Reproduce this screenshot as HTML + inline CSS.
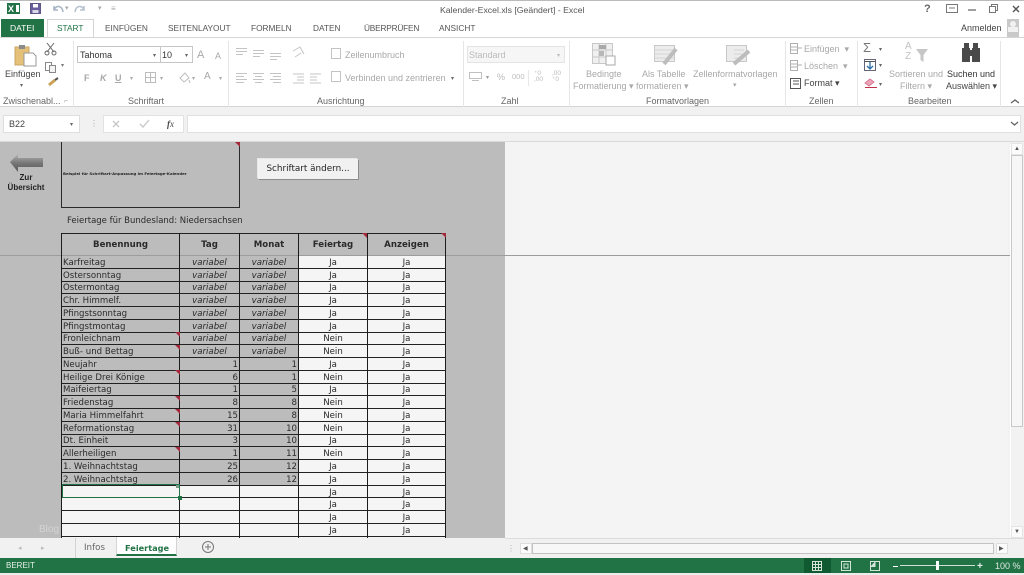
<!DOCTYPE html>
<html lang="de"><head><meta charset="utf-8"><title>Kalender-Excel</title>
<style>
html,body{margin:0;padding:0;width:1024px;height:575px;overflow:hidden;background:#fff}
body{position:relative;font-family:"Liberation Sans",sans-serif;color:#444}
.a,.t{position:absolute}
.t{white-space:nowrap;font-size:9px;line-height:12px;filter:blur(.25px)}
.dv{position:absolute;top:41px;height:66px;width:1px;background:#e6e6e6}
.g{color:#a8a8a8}
.tab{font-size:8.300px;color:#555;top:22px}
.lbl{top:95px;color:#666;font-size:9px}
.cell{position:absolute;margin-top:1px;font-family:"DejaVu Sans","Liberation Sans",sans-serif;font-size:8.600px;line-height:12px;height:12px;white-space:nowrap;color:#2a2a2a;filter:blur(.3px)}
.hl{position:absolute;left:61px;width:385px;height:1px;background:#222}
.vl{position:absolute;top:233px;height:305px;width:1px;background:#1c1c1c}
.red{position:absolute;width:0;height:0;border-top:5px solid #a32a3a;border-left:5px solid transparent}
svg{position:absolute;overflow:visible}
</style></head><body>

<!-- title bar -->
<div class="a" style="left:0;top:0;width:1024px;height:1px;background:#bbb"></div>
<div class="a" style="left:7px;top:3px;width:13px;height:11px;background:#217346"></div>
<div class="t" style="left:8px;top:3px;color:#fff;font-weight:bold;font-size:9px">X</div>
<div class="a" style="left:15px;top:4px;width:5px;height:9px;background:#fff;border:1px solid #217346;box-sizing:border-box"></div>
<svg style="left:30px;top:3px" width="12" height="12"><rect x="0.5" y="0.5" width="10" height="10" fill="#6a5f9a" stroke="#5d5688"/><rect x="3" y="1" width="5" height="3.5" fill="#fff"/><rect x="2.5" y="7" width="6" height="3" fill="#d8d8e8"/></svg>
<svg style="left:52px;top:3px" width="40" height="12" fill="none" stroke="#a9b6c6" stroke-width="1.6"><path d="M2 3 L2 7 L6 7 M2 7 C4 2 10 2 11 9"/><path d="M32 3 L32 7 L28 7 M32 7 C30 2 24 2 23 9" stroke="#b8c2ce"/></svg>
<div class="t g" style="left:65px;top:3px;font-size:7px">▾</div>
<div class="t g" style="left:98px;top:3px;font-size:7px">▾</div>
<div class="t g" style="left:111px;top:3px;font-size:8px">≡</div>
<div class="t" style="left:440px;top:4px;font-size:8.700px;color:#555">Kalender-Excel.xls [Geändert] - Excel</div>
<div class="t" style="left:924px;top:3px;font-size:11px;font-weight:bold;color:#666">?</div>
<svg style="left:945px;top:3px" width="78" height="12" fill="none" stroke="#777"><rect x="1.5" y="1.5" width="11" height="8"/><path d="M4 5h6"/><path d="M23 7h8" stroke-width="1.4"/><rect x="44.5" y="3.5" width="6" height="6"/><path d="M46.500 3.500v-2h6v6h-2"/><path d="M68 3l6 6M74 3l-6 6" stroke-width="1.4" stroke="#555"/></svg>

<!-- tabs -->
<div class="a" style="left:1px;top:19px;width:43px;height:18px;background:#217346"></div>
<div class="t" style="left:10px;top:22px;color:#fff;font-size:8.500px">DATEI</div>
<div class="a" style="left:47px;top:19px;width:47px;height:19px;background:#fff;border:1px solid #d4d4d4;border-bottom:0;box-sizing:border-box"></div>
<div class="t tab" style="left:57px;color:#217346">START</div>
<div class="t tab" style="left:105px">EINFÜGEN</div>
<div class="t tab" style="left:168px">SEITENLAYOUT</div>
<div class="t tab" style="left:251px">FORMELN</div>
<div class="t tab" style="left:313px">DATEN</div>
<div class="t tab" style="left:364px;letter-spacing:-.2px">ÜBERPRÜFEN</div>
<div class="t tab" style="left:439px">ANSICHT</div>
<div class="t" style="left:961px;top:22px;font-size:9px;color:#444">Anmelden</div>
<div class="a" style="left:1007px;top:19px;width:12px;height:18px;background:#c9c9c9"></div>
<div class="a" style="left:1010px;top:21px;width:6px;height:6px;border-radius:3px;background:#f1f1f1"></div>
<div class="a" style="left:1008px;top:27px;width:10px;height:5px;background:#f1f1f1"></div>
<div class="a" style="left:0;top:37px;width:1024px;height:1px;background:#d6d6d6"></div>

<!-- ribbon -->
<div class="a" style="left:0;top:106px;width:1024px;height:1px;background:#d4d4d4"></div>
<div class="a" style="left:0;top:107px;width:1024px;height:35px;background:#f1f1f1"></div>
<div class="dv" style="left:73px"></div><div class="dv" style="left:228px"></div><div class="dv" style="left:463px"></div><div class="dv" style="left:569px"></div><div class="dv" style="left:785px"></div><div class="dv" style="left:857px"></div><div class="dv" style="left:1000px"></div>

<!-- Clipboard -->
<svg style="left:14px;top:43px" width="24" height="24"><rect x="1" y="4" width="14" height="18" fill="#e4c078" stroke="#c9a765"/><rect x="5" y="2" width="6" height="4" fill="#8b8b8b"/><path d="M10 10h9l3 3v10H10z" fill="#fff" stroke="#999"/></svg>
<div class="t" style="left:5px;top:68px;font-size:9px;color:#444">Einfügen</div>
<div class="t" style="left:20px;top:80px;font-size:6px;color:#666">▾</div>
<svg style="left:44px;top:41px" width="22" height="50" fill="none" stroke="#666"><path d="M3 2l7 9M10 2l-7 9"/><circle cx="3" cy="12" r="2"/><circle cx="10" cy="12" r="2"/><rect x="1.500" y="21.500" width="6" height="8" stroke="#888"/><rect x="5.500" y="24.500" width="6" height="7" fill="#f4f4f4" stroke="#888"/><path d="M5 44l6-5" stroke="#c9a255" stroke-width="3"/><path d="M11 39l3-2" stroke="#555" stroke-width="2"/></svg>
<div class="t" style="left:61px;top:60px;font-size:6px;color:#777">▾</div>
<div class="t lbl" style="left:3px">Zwischenabl...</div>
<div class="t" style="left:64px;top:96px;font-size:7px;color:#999">⌐</div>

<!-- Font -->
<div class="a" style="left:77px;top:46px;width:84px;height:17px;background:#fff;border:1px solid #c6c6c6;box-sizing:border-box"></div>
<div class="a" style="left:160px;top:46px;width:33px;height:17px;background:#fff;border:1px solid #c6c6c6;box-sizing:border-box"></div>
<div class="t" style="left:80px;top:49px;color:#333;font-size:9px">Tahoma</div>
<div class="t" style="left:162px;top:49px;color:#333;font-size:9px">10</div>
<div class="t" style="left:153px;top:50px;font-size:6px;color:#666">▾</div>
<div class="t" style="left:185px;top:50px;font-size:6px;color:#666">▾</div>
<div class="t g" style="left:197px;top:49px;font-size:11px">A</div>
<div class="t g" style="left:215px;top:50px;font-size:9px">A</div>
<div class="t g" style="left:84px;top:72px;font-weight:bold">F</div>
<div class="t g" style="left:100px;top:72px;font-style:italic;font-weight:bold">K</div>
<div class="t g" style="left:115px;top:72px;font-weight:bold;text-decoration:underline">U</div>
<div class="t g" style="left:130px;top:73px;font-size:6px">▾</div>
<svg style="left:145px;top:72px" width="12" height="12" fill="none" stroke="#bcbcbc"><rect x=".5" y=".5" width="10" height="10"/><path d="M5.500 .5v10M.5 5.500h10"/></svg>
<div class="t g" style="left:160px;top:73px;font-size:6px">▾</div>
<svg style="left:178px;top:72px" width="13" height="12" fill="none" stroke="#bcbcbc"><path d="M2 6l5-5 4 5-5 4z"/><path d="M11 8l1 3"/></svg>
<div class="t g" style="left:192px;top:73px;font-size:6px">▾</div>
<div class="t g" style="left:204px;top:71px;font-size:10px">A</div>
<div class="t g" style="left:219px;top:73px;font-size:6px">▾</div>
<div class="t lbl" style="left:128px">Schriftart</div>

<!-- Alignment -->
<svg style="left:235px;top:46px" width="190" height="42" stroke="#c4c4c4" fill="none">
<path d="M1 2.500h11M1 5.500h11M1 8.500h7M18 4.500h11M18 7.500h11M18 10.500h7M35 7.500h11M35 10.500h11M35 13.500h7"/>
<path d="M1 27.500h11M1 30.500h8M1 33.500h11M1 36.500h8M18 27.500h11M20 30.500h7M18 33.500h11M20 36.500h7M35 27.500h11M38 30.500h8M35 33.500h11M38 36.500h8"/>
<path d="M58 5l7-4 4 7M60 11l6-4"/>
<path d="M58 28h11M62 31h7M62 34h7M58 37h11M75 28h11M75 31h7M75 34h7M75 37h11"/>
<rect x="96.500" y="2.500" width="9" height="10"/><rect x="96.500" y="25.500" width="9" height="10"/>
</svg>
<div class="t g" style="left:345px;top:49px;font-size:9px">Zeilenumbruch</div>
<div class="t g" style="left:345px;top:72px;font-size:9px">Verbinden und zentrieren</div>
<div class="t" style="left:451px;top:73px;font-size:6px;color:#666">▾</div>
<div class="t lbl" style="left:317px">Ausrichtung</div>

<!-- Number -->
<div class="a" style="left:467px;top:46px;width:98px;height:17px;background:#f6f6f6;border:1px solid #e4e4e4;box-sizing:border-box"></div>
<div class="t" style="left:469px;top:49px;font-size:9px;color:#bbb">Standard</div>
<div class="t" style="left:557px;top:50px;font-size:6px;color:#bbb">▾</div>
<svg style="left:469px;top:72px" width="14" height="10" fill="none" stroke="#c0c0c0"><rect x=".5" y=".5" width="12" height="6"/><path d="M3 8.500h7"/></svg>
<div class="t" style="left:486px;top:72px;font-size:6px;color:#999">▾</div>
<div class="t" style="left:497px;top:71px;font-size:9px;color:#bbb">%</div>
<div class="t" style="left:512px;top:71px;font-size:7.500px;color:#bbb">000</div>
<div class="t" style="left:534px;top:71px;font-size:6.500px;line-height:6px;color:#bbb">⁺0<br>,00</div>
<div class="t" style="left:552px;top:71px;font-size:6.500px;line-height:6px;color:#bbb">,00<br>⁺0</div>
<div class="a" style="left:528px;top:70px;width:1px;height:16px;background:#e6e6e6"></div>
<div class="t lbl" style="left:501px">Zahl</div>

<!-- Styles -->
<svg style="left:592px;top:43px" width="160" height="24" fill="none">
<rect x=".5" y=".5" width="20" height="20" fill="#f0f0f0" stroke="#c8c8c8"/><path d="M7 .5v20M14 .5v20M.5 7h20M.5 14h20" stroke="#c8c8c8"/><rect x="7" y="2" width="7" height="4" fill="#a9a9a9"/><rect x="7" y="8" width="5" height="5" fill="#b8b8b8"/><rect x="14" y="13" width="9" height="9" fill="#fff" stroke="#aaa"/>
<rect x="62.500" y="2.500" width="20" height="16" fill="#ececec" stroke="#c8c8c8"/><path d="M62 7h20M62 11h20M62 15h20" stroke="#d4d4d4"/><path d="M72 21l12-15" stroke="#bdbdbd" stroke-width="4"/>
<rect x="134.500" y="2.500" width="20" height="16" fill="#ececec" stroke="#c8c8c8"/><path d="M142 7h10M142 11h10M142 15h10" stroke="#d4d4d4"/><path d="M142 21l15-13" stroke="#bdbdbd" stroke-width="4"/>
</svg>
<div class="t g" style="left:586px;top:68px;font-size:9px">Bedingte</div>
<div class="t g" style="left:573px;top:80px;font-size:9px">Formatierung ▾</div>
<div class="t g" style="left:642px;top:68px;font-size:9px">Als Tabelle</div>
<div class="t g" style="left:636px;top:80px;font-size:9px">formatieren ▾</div>
<div class="t g" style="left:693px;top:68px;font-size:9px">Zellenformatvorlagen</div>
<div class="t g" style="left:733px;top:80px;font-size:7px">▾</div>
<div class="t lbl" style="left:646px">Formatvorlagen</div>

<!-- Cells -->
<svg style="left:790px;top:43px" width="14" height="46" fill="none" stroke="#b0b0b0"><rect x=".5" y=".5" width="7" height="10"/><path d="M.5 4h7M.5 7h7M8 5h4"/><rect x=".5" y="17.500" width="7" height="10"/><path d="M.5 21h7M.5 24h7M8 22h4"/><rect x=".5" y="35.500" width="10" height="10" stroke="#555"/><path d="M3 38h6M3 41h6" stroke="#555"/></svg>
<div class="t g" style="left:804px;top:43px;font-size:9px">Einfügen &nbsp;▾</div>
<div class="t g" style="left:804px;top:60px;font-size:9px">Löschen &nbsp;▾</div>
<div class="t" style="left:804px;top:77px;font-size:9px;color:#444">Format ▾</div>
<div class="t lbl" style="left:809px">Zellen</div>

<!-- Editing -->
<div class="t" style="left:863px;top:42px;font-size:13px;color:#777">Σ</div>
<div class="t" style="left:879px;top:44px;font-size:6px;color:#666">▾</div>
<svg style="left:864px;top:59px" width="14" height="14" fill="none"><rect x=".5" y=".5" width="11" height="11" stroke="#667"/><path d="M.5 2.500h11" stroke="#555"/><path d="M6 3v7M3 7l3 3 3-3" stroke="#2b6fa8" stroke-width="1.300"/></svg>
<div class="t" style="left:879px;top:60px;font-size:6px;color:#666">▾</div>
<svg style="left:864px;top:77px" width="14" height="12" fill="none"><path d="M1 6l5-4 4 3-5 4z" fill="#eda3b8" stroke="#d67a94"/><path d="M1 10.500h12" stroke="#c0304a"/></svg>
<div class="t" style="left:879px;top:79px;font-size:6px;color:#666">▾</div>
<div class="t" style="left:905px;top:42px;font-size:10px;line-height:10px;color:#c2c2c2">A<br>Z</div>
<svg style="left:915px;top:48px" width="14" height="16"><path d="M1 1h12L8.500 7v7L5.500 12V7z" fill="#c6c6c6"/></svg>
<div class="t g" style="left:889px;top:68px;font-size:9px">Sortieren und</div>
<div class="t g" style="left:900px;top:80px;font-size:9px">Filtern ▾</div>
<svg style="left:961px;top:43px" width="20" height="20" fill="#4a4a4a"><rect x="3" y="0" width="5" height="6"/><rect x="12" y="0" width="5" height="6"/><rect x="1" y="5" width="8" height="14"/><rect x="11" y="5" width="8" height="14"/><rect x="8" y="7" width="4" height="6"/></svg>
<div class="t" style="left:947px;top:68px;font-size:9px;color:#333">Suchen und</div>
<div class="t" style="left:946px;top:80px;font-size:9px;color:#444">Auswählen ▾</div>
<div class="t lbl" style="left:908px">Bearbeiten</div>
<svg style="left:1010px;top:98px" width="10" height="6" fill="none" stroke="#666" stroke-width="1.400"><path d="M1 5l4-3 4 3"/></svg>

<!-- formula bar -->
<div class="a" style="left:3px;top:115px;width:77px;height:18px;background:#fff;border:1px solid #dedede;box-sizing:border-box"></div>
<div class="t" style="left:9px;top:118px;font-size:9px;color:#444">B22</div>
<div class="t" style="left:70px;top:119px;font-size:6px;color:#666">▾</div>
<div class="t g" style="left:90px;top:118px;font-size:8px">⋮</div>
<div class="a" style="left:103px;top:115px;width:81px;height:18px;background:#fff;border:1px solid #e2e2e2;box-sizing:border-box"></div>
<svg style="left:112px;top:119px" width="40" height="10" fill="none" stroke="#c6c6c6" stroke-width="1.300"><path d="M1 2l6 6M7 2l-6 6M28 5l3 3 6-7"/></svg>
<div class="t" style="left:167px;top:118px;font-size:9px;font-family:'Liberation Serif',serif;font-style:italic;color:#444"><b>f</b>x</div>
<div class="a" style="left:187px;top:115px;width:834px;height:18px;background:#fff;border:1px solid #e0e0e0;box-sizing:border-box"></div>
<svg style="left:1010px;top:121px" width="9" height="6" fill="none" stroke="#666" stroke-width="1.300"><path d="M1 1l3.500 3L8 1"/></svg>

<!-- sheet -->
<div class="a" style="left:0;top:141px;width:1024px;height:1px;background:#d9d9d9"></div>
<div class="a" style="left:0;top:142px;width:505px;height:396px;background:#bcbcbc"></div>
<div class="a" style="left:505px;top:142px;width:505px;height:396px;background:#f4f4f4"></div>
<div class="a" style="left:1008px;top:142px;width:16px;height:396px;background:#f2f2f2"></div>
<div class="a" style="left:1010px;top:144px;width:1px;height:394px;background:#fff"></div>
<div class="a" style="left:1011px;top:143px;width:12px;height:12px;background:#fbfbfb;border:1px solid #e4e4e4;box-sizing:border-box"></div>
<div class="t" style="left:1014px;top:143px;font-size:6px;color:#555">▲</div>
<div class="a" style="left:1011px;top:155px;width:12px;height:272px;background:#f6f6f6;border:1px solid #c8c8c8;box-sizing:border-box"></div>
<div class="a" style="left:1011px;top:526px;width:12px;height:12px;background:#fbfbfb;border:1px solid #e4e4e4;box-sizing:border-box"></div>
<div class="t" style="left:1014px;top:526px;font-size:6px;color:#555">▼</div>

<!-- arrow -->
<svg style="left:10px;top:152px" width="34" height="22"><defs><linearGradient id="ag" x1="0" x2="0" y1="0" y2="1"><stop offset="0" stop-color="#b5b5b5"/><stop offset=".5" stop-color="#777"/><stop offset="1" stop-color="#555"/></linearGradient></defs><path d="M0 10L8 2V6H33V15H8V20Z" fill="url(#ag)"/></svg>
<div class="t" style="left:0;top:173px;width:52px;text-align:center;font-size:8px;line-height:10px;font-weight:bold;color:#222">Zur<br>Übersicht</div>

<!-- top box -->
<div class="a" style="left:61px;top:142px;width:179px;height:66px;border:1px solid #2a2a2a;border-top:0;box-sizing:border-box"></div>
<div class="red" style="left:235px;top:142px"></div>
<div class="t" style="left:63px;top:172px;font-size:3.900px;line-height:4px;font-family:'DejaVu Sans',sans-serif;font-weight:bold;color:#222">Beispiel für Schriftart-Anpassung im Feiertage-Kalender</div>

<!-- button -->
<div class="a" style="left:258px;top:159px;width:100px;height:20px;background:#f1f1f1;box-shadow:1px 1px 0 #8b8b8b,-1px -1px 0 #e8e8e8"></div>
<div class="t" style="left:258px;top:163px;width:100px;text-align:center;font-family:'DejaVu Sans',sans-serif;font-size:8.800px;color:#222">Schriftart ändern...</div>

<div class="cell" style="left:67px;top:214px;font-size:8.500px">Feiertage für Bundesland: Niedersachsen</div>

<!-- table backgrounds -->
<div class="a" style="left:298px;top:255px;width:148px;height:230px;background:#f5f5f5"></div>
<div class="a" style="left:62px;top:485px;width:384px;height:53px;background:#f5f5f5"></div>

<!-- horizontal freeze line -->
<div class="a" style="left:0;top:255px;width:1010px;height:1px;background:#9c9c9c"></div>

<!-- lines -->
<div class="hl" style="top:233px"></div>
<div class="hl" style="top:268px"></div><div class="hl" style="top:281px"></div><div class="hl" style="top:293px"></div><div class="hl" style="top:306px"></div><div class="hl" style="top:319px"></div><div class="hl" style="top:332px"></div><div class="hl" style="top:344px"></div><div class="hl" style="top:357px"></div><div class="hl" style="top:370px"></div><div class="hl" style="top:383px"></div><div class="hl" style="top:395px"></div><div class="hl" style="top:408px"></div><div class="hl" style="top:421px"></div><div class="hl" style="top:434px"></div><div class="hl" style="top:446px"></div><div class="hl" style="top:459px"></div><div class="hl" style="top:472px"></div><div class="hl" style="top:485px"></div><div class="hl" style="top:497px"></div><div class="hl" style="top:510px"></div><div class="hl" style="top:523px"></div><div class="hl" style="top:536px"></div>
<div class="vl" style="left:61px"></div><div class="vl" style="left:179px"></div><div class="vl" style="left:239px"></div><div class="vl" style="left:298px"></div><div class="vl" style="left:367px"></div><div class="vl" style="left:445px"></div>

<!-- header -->
<div class="cell" style="left:62px;width:117px;top:238px;text-align:center;font-weight:bold">Benennung</div>
<div class="cell" style="left:180px;width:59px;top:238px;text-align:center;font-weight:bold">Tag</div>
<div class="cell" style="left:240px;width:58px;top:238px;text-align:center;font-weight:bold">Monat</div>
<div class="cell" style="left:299px;width:68px;top:238px;text-align:center;font-weight:bold">Feiertag</div>
<div class="cell" style="left:368px;width:77px;top:238px;text-align:center;font-weight:bold">Anzeigen</div>
<div class="red" style="left:362px;top:233px"></div><div class="red" style="left:441px;top:233px"></div>

<!-- names -->
<div class="cell" style="left:63px;top:256px">Karfreitag</div>
<div class="cell" style="left:63px;top:269px">Ostersonntag</div>
<div class="cell" style="left:63px;top:281px">Ostermontag</div>
<div class="cell" style="left:63px;top:294px">Chr. Himmelf.</div>
<div class="cell" style="left:63px;top:307px">Pfingstsonntag</div>
<div class="cell" style="left:63px;top:320px">Pfingstmontag</div>
<div class="cell" style="left:63px;top:332px">Fronleichnam</div>
<div class="cell" style="left:63px;top:345px">Buß- und Bettag</div>
<div class="cell" style="left:63px;top:358px">Neujahr</div>
<div class="cell" style="left:63px;top:371px">Heilige Drei Könige</div>
<div class="cell" style="left:63px;top:383px">Maifeiertag</div>
<div class="cell" style="left:63px;top:396px">Friedenstag</div>
<div class="cell" style="left:63px;top:409px">Maria Himmelfahrt</div>
<div class="cell" style="left:63px;top:422px">Reformationstag</div>
<div class="cell" style="left:63px;top:434px">Dt. Einheit</div>
<div class="cell" style="left:63px;top:447px">Allerheiligen</div>
<div class="cell" style="left:63px;top:460px">1. Weihnachtstag</div>
<div class="cell" style="left:63px;top:473px">2. Weihnachtstag</div>

<!-- variabel -->
<div class="cell" style="left:180px;width:59px;text-align:center;font-style:italic;top:256px">variabel</div><div class="cell" style="left:240px;width:58px;text-align:center;font-style:italic;top:256px">variabel</div>
<div class="cell" style="left:180px;width:59px;text-align:center;font-style:italic;top:269px">variabel</div><div class="cell" style="left:240px;width:58px;text-align:center;font-style:italic;top:269px">variabel</div>
<div class="cell" style="left:180px;width:59px;text-align:center;font-style:italic;top:281px">variabel</div><div class="cell" style="left:240px;width:58px;text-align:center;font-style:italic;top:281px">variabel</div>
<div class="cell" style="left:180px;width:59px;text-align:center;font-style:italic;top:294px">variabel</div><div class="cell" style="left:240px;width:58px;text-align:center;font-style:italic;top:294px">variabel</div>
<div class="cell" style="left:180px;width:59px;text-align:center;font-style:italic;top:307px">variabel</div><div class="cell" style="left:240px;width:58px;text-align:center;font-style:italic;top:307px">variabel</div>
<div class="cell" style="left:180px;width:59px;text-align:center;font-style:italic;top:320px">variabel</div><div class="cell" style="left:240px;width:58px;text-align:center;font-style:italic;top:320px">variabel</div>
<div class="cell" style="left:180px;width:59px;text-align:center;font-style:italic;top:332px">variabel</div><div class="cell" style="left:240px;width:58px;text-align:center;font-style:italic;top:332px">variabel</div>
<div class="cell" style="left:180px;width:59px;text-align:center;font-style:italic;top:345px">variabel</div><div class="cell" style="left:240px;width:58px;text-align:center;font-style:italic;top:345px">variabel</div>

<!-- numbers -->
<div class="cell" style="left:180px;width:58px;text-align:right;top:358px">1</div><div class="cell" style="left:240px;width:57px;text-align:right;top:358px">1</div>
<div class="cell" style="left:180px;width:58px;text-align:right;top:371px">6</div><div class="cell" style="left:240px;width:57px;text-align:right;top:371px">1</div>
<div class="cell" style="left:180px;width:58px;text-align:right;top:383px">1</div><div class="cell" style="left:240px;width:57px;text-align:right;top:383px">5</div>
<div class="cell" style="left:180px;width:58px;text-align:right;top:396px">8</div><div class="cell" style="left:240px;width:57px;text-align:right;top:396px">8</div>
<div class="cell" style="left:180px;width:58px;text-align:right;top:409px">15</div><div class="cell" style="left:240px;width:57px;text-align:right;top:409px">8</div>
<div class="cell" style="left:180px;width:58px;text-align:right;top:422px">31</div><div class="cell" style="left:240px;width:57px;text-align:right;top:422px">10</div>
<div class="cell" style="left:180px;width:58px;text-align:right;top:434px">3</div><div class="cell" style="left:240px;width:57px;text-align:right;top:434px">10</div>
<div class="cell" style="left:180px;width:58px;text-align:right;top:447px">1</div><div class="cell" style="left:240px;width:57px;text-align:right;top:447px">11</div>
<div class="cell" style="left:180px;width:58px;text-align:right;top:460px">25</div><div class="cell" style="left:240px;width:57px;text-align:right;top:460px">12</div>
<div class="cell" style="left:180px;width:58px;text-align:right;top:473px">26</div><div class="cell" style="left:240px;width:57px;text-align:right;top:473px">12</div>

<!-- Feiertag / Anzeigen -->
<div class="cell" style="left:299px;width:68px;text-align:center;top:256px">Ja</div><div class="cell" style="left:368px;width:77px;text-align:center;top:256px">Ja</div>
<div class="cell" style="left:299px;width:68px;text-align:center;top:269px">Ja</div><div class="cell" style="left:368px;width:77px;text-align:center;top:269px">Ja</div>
<div class="cell" style="left:299px;width:68px;text-align:center;top:281px">Ja</div><div class="cell" style="left:368px;width:77px;text-align:center;top:281px">Ja</div>
<div class="cell" style="left:299px;width:68px;text-align:center;top:294px">Ja</div><div class="cell" style="left:368px;width:77px;text-align:center;top:294px">Ja</div>
<div class="cell" style="left:299px;width:68px;text-align:center;top:307px">Ja</div><div class="cell" style="left:368px;width:77px;text-align:center;top:307px">Ja</div>
<div class="cell" style="left:299px;width:68px;text-align:center;top:320px">Ja</div><div class="cell" style="left:368px;width:77px;text-align:center;top:320px">Ja</div>
<div class="cell" style="left:299px;width:68px;text-align:center;top:332px">Nein</div><div class="cell" style="left:368px;width:77px;text-align:center;top:332px">Ja</div>
<div class="cell" style="left:299px;width:68px;text-align:center;top:345px">Nein</div><div class="cell" style="left:368px;width:77px;text-align:center;top:345px">Ja</div>
<div class="cell" style="left:299px;width:68px;text-align:center;top:358px">Ja</div><div class="cell" style="left:368px;width:77px;text-align:center;top:358px">Ja</div>
<div class="cell" style="left:299px;width:68px;text-align:center;top:371px">Nein</div><div class="cell" style="left:368px;width:77px;text-align:center;top:371px">Ja</div>
<div class="cell" style="left:299px;width:68px;text-align:center;top:383px">Ja</div><div class="cell" style="left:368px;width:77px;text-align:center;top:383px">Ja</div>
<div class="cell" style="left:299px;width:68px;text-align:center;top:396px">Nein</div><div class="cell" style="left:368px;width:77px;text-align:center;top:396px">Ja</div>
<div class="cell" style="left:299px;width:68px;text-align:center;top:409px">Nein</div><div class="cell" style="left:368px;width:77px;text-align:center;top:409px">Ja</div>
<div class="cell" style="left:299px;width:68px;text-align:center;top:422px">Nein</div><div class="cell" style="left:368px;width:77px;text-align:center;top:422px">Ja</div>
<div class="cell" style="left:299px;width:68px;text-align:center;top:434px">Ja</div><div class="cell" style="left:368px;width:77px;text-align:center;top:434px">Ja</div>
<div class="cell" style="left:299px;width:68px;text-align:center;top:447px">Nein</div><div class="cell" style="left:368px;width:77px;text-align:center;top:447px">Ja</div>
<div class="cell" style="left:299px;width:68px;text-align:center;top:460px">Ja</div><div class="cell" style="left:368px;width:77px;text-align:center;top:460px">Ja</div>
<div class="cell" style="left:299px;width:68px;text-align:center;top:473px">Ja</div><div class="cell" style="left:368px;width:77px;text-align:center;top:473px">Ja</div>
<div class="cell" style="left:299px;width:68px;text-align:center;top:486px">Ja</div><div class="cell" style="left:368px;width:77px;text-align:center;top:486px">Ja</div>
<div class="cell" style="left:299px;width:68px;text-align:center;top:498px">Ja</div><div class="cell" style="left:368px;width:77px;text-align:center;top:498px">Ja</div>
<div class="cell" style="left:299px;width:68px;text-align:center;top:511px">Ja</div><div class="cell" style="left:368px;width:77px;text-align:center;top:511px">Ja</div>
<div class="cell" style="left:299px;width:68px;text-align:center;top:524px">Ja</div><div class="cell" style="left:368px;width:77px;text-align:center;top:524px">Ja</div>

<!-- comment marks -->
<div class="red" style="left:175px;top:332px"></div><div class="red" style="left:175px;top:345px"></div><div class="red" style="left:175px;top:370px"></div><div class="red" style="left:175px;top:396px"></div><div class="red" style="left:175px;top:409px"></div><div class="red" style="left:175px;top:422px"></div><div class="red" style="left:175px;top:447px"></div>

<!-- selection -->
<div class="a" style="left:62px;top:484px;width:118px;height:14px;border:1px solid #217346;box-sizing:border-box"></div>
<div class="a" style="left:178px;top:496px;width:4px;height:4px;background:#217346"></div>
<div class="a" style="left:176px;top:485px;width:3px;height:3px;background:#7a9a88"></div>
<div class="t" style="left:39px;top:524px;font-size:10px;color:#d4d4d4">Blog</div>

<!-- tabs bar -->
<div class="a" style="left:0;top:538px;width:1024px;height:20px;background:#f1f1f1"></div>
<div class="a" style="left:505px;top:538px;width:519px;height:1px;background:#dcdcdc"></div>
<div class="t" style="left:18px;top:543px;font-size:7px;color:#bbb">◂</div>
<div class="t" style="left:41px;top:543px;font-size:7px;color:#bbb">▸</div>
<div class="a" style="left:75px;top:538px;width:1px;height:20px;background:#d4d4d4"></div>
<div class="t" style="left:84px;top:542px;font-family:'DejaVu Sans',sans-serif;font-size:8.700px;color:#666">Infos</div>
<div class="a" style="left:116px;top:537px;width:61px;height:19px;background:#fff;border-left:1px solid #d4d4d4;border-right:1px solid #d4d4d4;border-bottom:2px solid #217346;box-sizing:border-box"></div>
<div class="t" style="left:125px;top:542px;font-family:'DejaVu Sans',sans-serif;font-size:8.200px;font-weight:bold;color:#217346">Feiertage</div>
<svg style="left:202px;top:541px" width="13" height="13" fill="none" stroke="#777"><circle cx="6" cy="6" r="5.500"/><path d="M3 6h6M6 3v6"/></svg>
<div class="t" style="left:507px;top:543px;font-size:8px;color:#aaa">⋮</div>
<div class="a" style="left:520px;top:543px;width:12px;height:11px;background:#fbfbfb;border:1px solid #ddd;box-sizing:border-box"></div>
<div class="t" style="left:523px;top:543px;font-size:6px;color:#555">◀</div>
<div class="a" style="left:532px;top:543px;width:462px;height:11px;background:#f7f7f7;border:1px solid #c2c2c2;box-sizing:border-box"></div>
<div class="a" style="left:996px;top:543px;width:12px;height:11px;background:#fbfbfb;border:1px solid #ddd;box-sizing:border-box"></div>
<div class="t" style="left:999px;top:543px;font-size:6px;color:#555">▶</div>

<!-- status bar -->
<div class="a" style="left:0;top:558px;width:1024px;height:15px;background:#217346"></div>
<div class="t" style="left:6px;top:560px;font-size:8px;color:#e8f0ea">BEREIT</div>
<div class="a" style="left:804px;top:558px;width:27px;height:15px;background:#0f5a30"></div>
<svg style="left:812px;top:561px" width="90" height="11" fill="none" stroke="#d6e4da"><rect x=".5" y=".5" width="9" height="9"/><path d="M3.500 .5v9M6.500 .5v9M.5 3.500h9M.5 6.500h9"/><rect x="29.500" y=".5" width="9" height="9"/><rect x="32" y="3" width="4" height="4"/><rect x="58.500" y=".5" width="9" height="9"/><path d="M63 .5v5h-4.500" fill="#d6e4da"/></svg>
<div class="a" style="left:893px;top:566px;width:5px;height:1px;background:#fff"></div>
<div class="a" style="left:900px;top:565px;width:75px;height:1px;background:#cfe0d4"></div>
<div class="a" style="left:936px;top:561px;width:3px;height:9px;background:#fff"></div>
<div class="t" style="left:977px;top:561px;font-size:10px;font-weight:bold;color:#e8f0ea">+</div>
<div class="t" style="left:995px;top:560px;font-size:9px;color:#dfe9e2">100 %</div>
<div class="a" style="left:0;top:573px;width:1024px;height:2px;background:#ececec"></div>
</body></html>
